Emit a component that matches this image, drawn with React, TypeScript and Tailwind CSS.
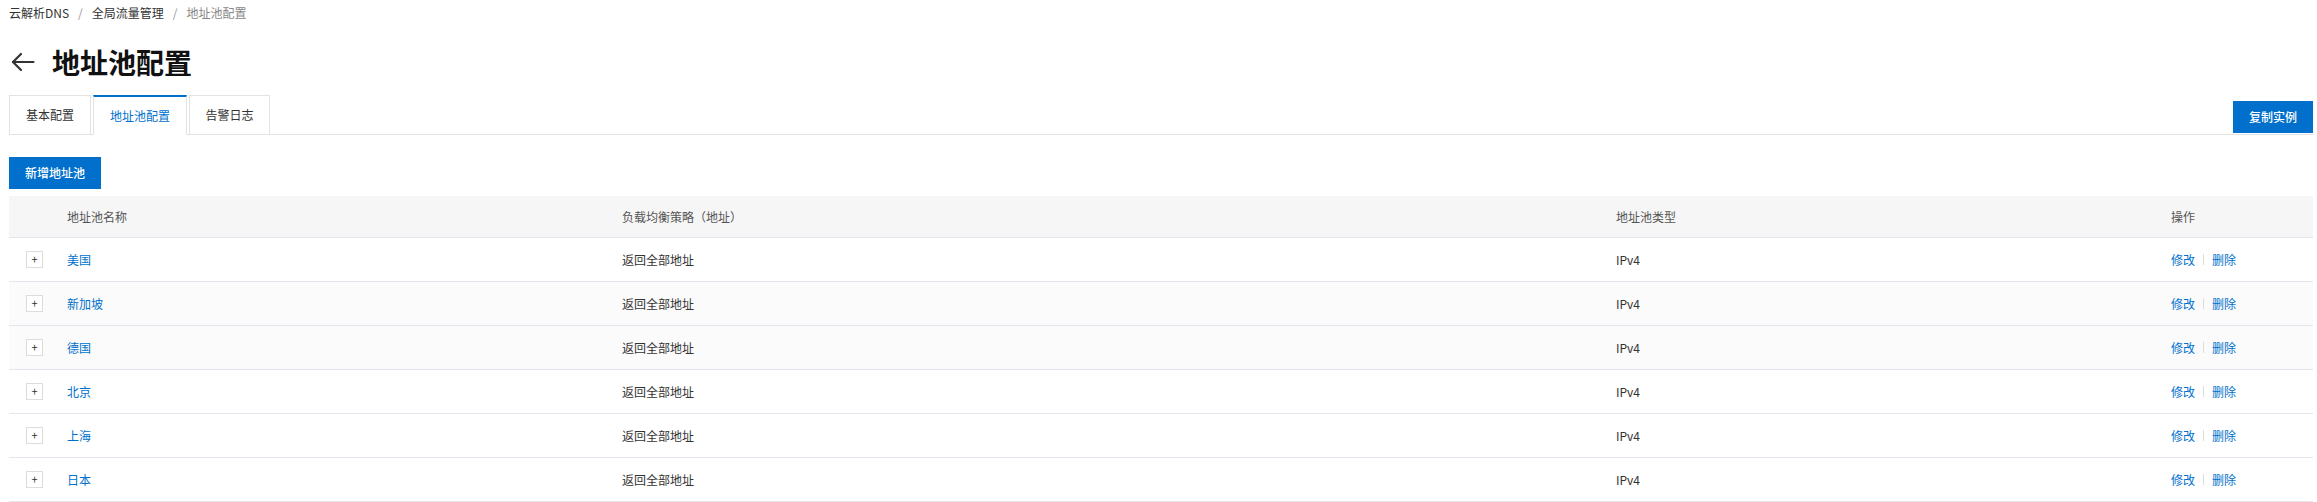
import React from 'react';

const pools = ['美国', '新加坡', '德国', '北京', '上海', '日本'];

const App: React.FC = () => {
  return (
    <div className="min-h-screen bg-white pl-[9px] pr-[4px] font-['Noto_Sans_CJK_SC','Microsoft_YaHei',sans-serif] text-[12px] text-[#333]">
      {/* Breadcrumb */}
      <div className="h-[26px] flex items-center leading-none">
        <span className="text-[#333]">云解析DNS</span>
        <span className="mx-[9px] text-[#999]">/</span>
        <span className="text-[#333]">全局流量管理</span>
        <span className="mx-[9px] text-[#999]">/</span>
        <span className="text-[#888]">地址池配置</span>
      </div>

      {/* Title */}
      <div className="mt-[18px] h-[36px] flex items-center">
        <svg width="24" height="20" viewBox="0 0 24 20" className="ml-[2px] text-[#333]" fill="none" stroke="currentColor" strokeWidth="2.2" strokeLinecap="round" strokeLinejoin="round">
          <path d="M22.5 10H2" />
          <path d="M10 2L2 10l8 8" />
        </svg>
        <h1 className="ml-[17px] text-[28px] font-bold leading-none text-[#111]">地址池配置</h1>
      </div>

      {/* Tabs */}
      <div className="mt-[15px] flex items-end justify-between border-b border-[#e3e3e3]">
        <div className="flex gap-[2px]">
          <button className="-mb-px w-[82px] h-[40px] border border-[#e3e3e3] bg-white text-[#333]">基本配置</button>
          <button className="-mb-px w-[94px] h-[40px] border-x border-[#e3e3e3] border-t-2 border-t-[#0070cc] bg-white text-[#0070cc]">地址池配置</button>
          <button className="-mb-px w-[81px] h-[40px] border border-[#e3e3e3] bg-white text-[#333]">告警日志</button>
        </div>
        <button className="mb-px w-[80px] h-[32px] bg-[#0070cc] text-white font-medium">复制实例</button>
      </div>

      {/* Add pool */}
      <button className="mt-[22px] w-[92px] h-[32px] bg-[#0070cc] text-white font-medium">新增地址池</button>

      {/* Table */}
      <div className="mt-[7px]">
        <div className="grid grid-cols-[58px_555px_994px_555px_1fr] items-center h-[42px] bg-[#f6f6f6] border-b border-[#e3e6ee] text-[#555]">
          <div />
          <div>地址池名称</div>
          <div>负载均衡策略（地址）</div>
          <div>地址池类型</div>
          <div>操作</div>
        </div>
        {pools.map((name, i) => (
          <div
            key={name}
            className={`grid grid-cols-[58px_555px_994px_555px_1fr] items-center h-[44px] border-b border-[#e3e6ee] ${
              i === 1 || i === 2 ? 'bg-[#fbfbfc]' : 'bg-white'
            }`}
          >
            <div className="pl-[17px]">
              <span className="flex items-center justify-center w-[17px] h-[17px] border border-[#dcdcdc] bg-white text-[11px] leading-none text-[#333]">+</span>
            </div>
            <div className="text-[#0070cc]">{name}</div>
            <div>返回全部地址</div>
            <div>IPv4</div>
            <div className="flex items-center text-[#0070cc]">
              <span>修改</span>
              <span className="mx-[8px] h-[11px] w-px bg-[#dddddd]" />
              <span>删除</span>
            </div>
          </div>
        ))}
      </div>
    </div>
  );
};

export default App;
